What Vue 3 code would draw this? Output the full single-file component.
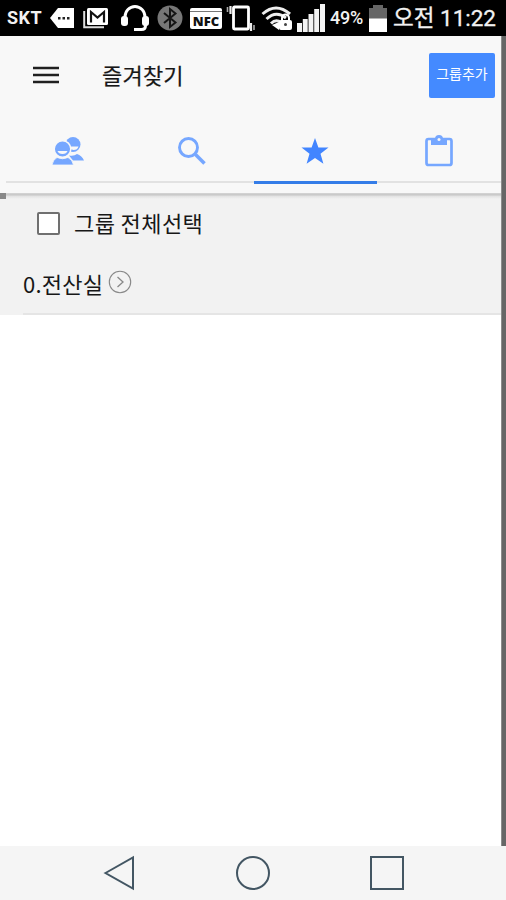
<script setup>
import { ref } from 'vue'

const activeTab = ref('favorites')
const allSelected = ref(false)
const tabs = ['people', 'search', 'favorites', 'clipboard']
const groups = ['0.전산실']
</script>

<template>
  <div class="phone">
    <header class="status">
      <span class="carrier">SKT</span>
      <svg class="tag" width="24" height="22" viewBox="0 0 24 22">
        <path d="M0 11 8 1H24V21H8Z" fill="#fff" />
        <path d="M8 10h2.500v2.500H8zM12.500 10H15v2.500h-2.500zM17 10h2.500v2.500H17z" fill="#222" />
      </svg>
      <svg class="mail" width="25" height="22" viewBox="0 0 25 22">
        <path d="M1.200 4V20.300H21" fill="none" stroke="#ddd" stroke-width="2" />
        <rect x="4" y="1" width="21" height="17" rx="1.500" fill="#fff" />
        <path d="M8 15.500V5l6.500 5.500L21 5v10.500" fill="none" stroke="#111" stroke-width="2.200" />
      </svg>
      <svg class="headset" width="30" height="28" viewBox="0 0 30 28">
        <path d="M5 17V13a10 10.500 0 0 1 20 0v4" fill="none" stroke="#fff" stroke-width="2.800" />
        <rect x="1" y="12" width="7" height="10" rx="3" fill="#fff" />
        <rect x="22" y="12" width="7" height="10" rx="3" fill="#fff" />
        <path d="M25.500 20v1.500q0 4-4 4H14" fill="none" stroke="#fff" stroke-width="3" />
      </svg>
      <svg class="bluetooth" width="26" height="26" viewBox="0 0 26 26">
        <circle cx="13" cy="13" r="12.500" fill="#777" />
        <path d="M7 8 18.500 17.500 13 22V4l5.500 4.500L7 18" fill="none" stroke="#151515" stroke-width="2" />
      </svg>
      <span class="nfc"><b>NFC</b></span>
      <svg class="vibrate" width="29" height="27" viewBox="0 0 29 27">
        <rect x="7.500" y="2" width="15" height="22" rx="1" fill="none" stroke="#fff" stroke-width="2.800" />
        <path d="M4.500 1v8M25 18v8" stroke="#eee" stroke-width="2.200" />
        <path d="M1.500 2v5M28 20v5" stroke="#aaa" stroke-width="1.600" />
      </svg>
      <svg class="wifi" width="32" height="26" viewBox="0 0 32 26">
        <path d="M1.500 9Q15 -3 29 9M5.500 14Q15 5 25 13M10 18.500q5-5 10-1" fill="none" stroke="#eee" stroke-width="3" />
        <path d="m11 20 7-3v8Z" fill="#fff" />
        <rect x="18" y="15" width="13" height="10" rx="2" fill="#fff" />
        <path d="M21 16v-3a3.500 3.500 0 0 1 7 0v3" fill="none" stroke="#fff" stroke-width="2" />
        <circle cx="24.500" cy="19.500" r="1.500" fill="#444" />
      </svg>
      <svg class="signal" width="28" height="28" viewBox="0 0 28 28">
        <path d="M0 19h5v9H0zM5.800 15h4.900v13H5.800zM11.500 10h4.900v18h-4.900zM17.200 5h4.900v23h-4.900zM23 0h5v28h-5z" fill="#f4f4f4" />
      </svg>
      <span class="percent">49%</span>
      <svg class="battery" width="18" height="28" viewBox="0 0 18 28">
        <path d="M0 4h4V1h10v3h4v11H0z" fill="#666" />
        <path d="M0 14.500h18V28H0z" fill="#fff" />
      </svg>
      <span class="clock">오전 11:22</span>
    </header>

    <div class="body">
      <main class="app">
        <div class="toolbar">
          <svg class="menu" width="26" height="18" viewBox="0 0 26 18">
            <path d="M0 2h26M0 9h26M0 16h26" stroke="#202020" stroke-width="2.300" />
          </svg>
          <h1>즐겨찾기</h1>
          <button class="add">그룹추가</button>
        </div>
        <nav class="tabs">
          <a v-for="tab in tabs" :key="tab" class="tab" :class="{ active: tab === activeTab }" @click="activeTab = tab">
            <svg v-if="tab === 'people'" width="34" height="30" viewBox="0 0 34 30">
              <g fill="#76a7ff">
                <circle cx="22" cy="8.500" r="7.500" />
                <path d="M18 19.500q5 1 8-1.500 5 1.500 7 6.500H22Z" />
              </g>
              <path d="M19 10.500h8.500q-1 3.500-5 3.500l-3.500-1z" fill="#f8f8f8" />
              <circle cx="11.500" cy="13" r="8.300" fill="#76a7ff" stroke="#f8f8f8" stroke-width="1.500" />
              <path d="M6.500 15h10q-1 3-5 3t-5-3Z" fill="#f8f8f8" />
              <path d="M6 21.500q5.500 2.500 11 0 4.500 2 5.500 7.500H1Q2 23.500 6 21.500Z" fill="#76a7ff" stroke="#f8f8f8" stroke-width=".8" />
            </svg>
            <svg v-else-if="tab === 'search'" width="28" height="28" viewBox="0 0 28 28">
              <circle cx="10.500" cy="10.500" r="9" fill="none" stroke="#76a7ff" stroke-width="2.900" />
              <path d="m17.500 17.500 9 9" stroke="#76a7ff" stroke-width="3.500" />
            </svg>
            <svg v-else-if="tab === 'favorites'" width="28" height="28" viewBox="0 0 28 28">
              <path d="m14 1 3.400 9.400 10.100.2-8 6.100 2.900 10.100L14 21l-8.400 5.800 2.900-10.100-8-6.100 10.100-.2Z" fill="#4285ff" />
            </svg>
            <svg v-else width="28" height="33" viewBox="0 0 28 33">
              <rect x="1.500" y="5" width="25" height="26" rx="2" fill="none" stroke="#76a7ff" stroke-width="2.700" />
              <path d="M6 5h4a4 4 0 0 1 8 0h4v6H6Z" fill="#76a7ff" />
              <circle cx="14" cy="5.500" r="1.500" fill="#f8f8f8" />
            </svg>
          </a>
        </nav>
        <div class="edge"><i></i></div>
        <section class="list">
          <label class="select-all">
            <input v-model="allSelected" type="checkbox" />
            <span>그룹 전체선택</span>
          </label>
          <div v-for="group in groups" :key="group" class="group">
            <span>{{ group }}</span>
            <svg width="24" height="24" viewBox="0 0 24 24" fill="none">
              <circle cx="12" cy="12" r="10.700" stroke="#888" stroke-width="1.100" />
              <path d="m9.500 7 5.500 5-5.500 5" stroke="#888" stroke-width="1.300" />
            </svg>
          </div>
        </section>
      </main>
      <aside class="drawer-edge"></aside>
    </div>

    <footer class="navbar">
      <svg width="36" height="36" viewBox="0 0 36 36"><path d="M4.500 18 32 2.500v31Z" /></svg>
      <svg width="36" height="36" viewBox="0 0 36 36"><circle cx="18" cy="18" r="16" /></svg>
      <svg width="36" height="36" viewBox="0 0 36 36"><rect x="2" y="2" width="32" height="32" /></svg>
    </footer>
  </div>
</template>

<style>
body {
  background: #fff;
}
</style>

<style scoped>
.phone {
  width: 506px;
  height: 900px;
  display: flex;
  flex-direction: column;
  overflow: hidden;
  font-family: "Noto Sans CJK KR", sans-serif;
  color: #171717;
}
.status {
  box-sizing: border-box;
  height: 36px;
  flex: none;
  display: flex;
  align-items: center;
  padding-left: 7px;
  background: #000;
  color: #f2f2f2;
  white-space: nowrap;
}
.status svg {
  flex: none;
}
.carrier {
  width: 43px;
  font: 700 18px/36px Roboto, sans-serif;
  letter-spacing: 0.5px;
}
.tag {
  margin-right: 9px;
}
.mail {
  margin-right: 12px;
}
.headset {
  margin-right: 7px;
}
.bluetooth {
  margin-right: 7px;
}
.nfc {
  box-sizing: border-box;
  width: 32px;
  height: 21px;
  flex: none;
  margin-right: 4px;
  padding-top: 5px;
  border-radius: 2px;
  background: linear-gradient(#fff 3px, #777 3px, #777 4px, #fff 4px);
  color: #111;
  text-align: center;
  font: 700 13px/16px "Open Sans", sans-serif;
}
.vibrate {
  margin-right: 6px;
}
.wifi {
  margin-right: 4px;
}
.signal {
  margin-right: 5px;
}
.percent {
  width: 39px;
  font: 500 18px/36px Roboto, sans-serif;
  letter-spacing: -0.2px;
}
.battery {
  margin-right: 6px;
}
.clock {
  font: 400 22.500px/36px Roboto, "Noto Sans CJK KR", sans-serif;
  -webkit-text-stroke: 0.3px;
}
.body {
  flex: 1;
  display: flex;
  min-height: 0;
}
.app {
  flex: 1;
  background: #fff;
}
.drawer-edge {
  box-sizing: border-box;
  width: 5px;
  border-left: 1px solid #8c8c8c;
  background: #666;
}
.toolbar {
  box-sizing: border-box;
  height: 84px;
  display: flex;
  align-items: flex-start;
  padding: 17px 6px 0 33px;
  background: #f8f8f8;
}
.menu {
  margin: 13px 43px 0 0;
}
h1 {
  margin: 0;
  flex: 1;
  font-size: 22px;
  line-height: 43px;
  font-weight: 400;
  letter-spacing: 0.2px;
  -webkit-text-stroke: 0.2px;
}
.add {
  width: 66px;
  height: 45px;
  padding: 0 0 5px;
  border: 0;
  border-radius: 2px;
  background: #448aff;
  color: #fff;
  font: 400 14px/20px "Noto Sans CJK KR", sans-serif;
}
.tabs {
  height: 64px;
  display: flex;
  padding-left: 6px;
  background: #f8f8f8;
}
.tab {
  flex: 1;
  box-sizing: border-box;
  display: flex;
  align-items: center;
  justify-content: center;
  border-bottom: 2px solid #e2e2e2;
  margin-bottom: 1px;
}
.tab.active {
  border-bottom: 3px solid #357de8;
  margin-bottom: 0;
}
.edge {
  box-sizing: border-box;
  height: 15px;
  padding-top: 9px;
  background: linear-gradient(#f8f8f8 9px, #d6d6d6 9px, #c6c6c6 11px, #e2e2e2 12px, #f2f2f2 15px);
}
.edge i {
  display: block;
  width: 6px;
  height: 6px;
  background: #888;
}
.list {
  box-sizing: border-box;
  height: 116px;
  padding: 7px 0 0 23px;
  background: #f2f2f2;
  font-size: 22px;
}
.select-all {
  height: 34px;
  display: flex;
  align-items: center;
  padding-left: 14px;
  gap: 14px;
}
.select-all span {
  margin-bottom: 3px;
  letter-spacing: 0.4px;
}
input {
  appearance: none;
  box-sizing: border-box;
  width: 23px;
  height: 23px;
  margin: 0;
  border: 2px solid #707070;
  border-radius: 2px;
  background: #fff;
}
.group {
  box-sizing: border-box;
  height: 75px;
  display: flex;
  align-items: center;
  gap: 5px;
  padding-top: 13px;
  border-bottom: 2px solid #e5e5e5;
}
.group span {
  letter-spacing: 0.25px;
}
.group svg {
  margin-bottom: 3px;
}
.navbar {
  height: 54px;
  flex: none;
  display: flex;
  align-items: center;
  justify-content: center;
  gap: 98px;
  background: #f5f5f5;
}
.navbar svg {
  fill: none;
  stroke: #435663;
  stroke-width: 2;
}
</style>
